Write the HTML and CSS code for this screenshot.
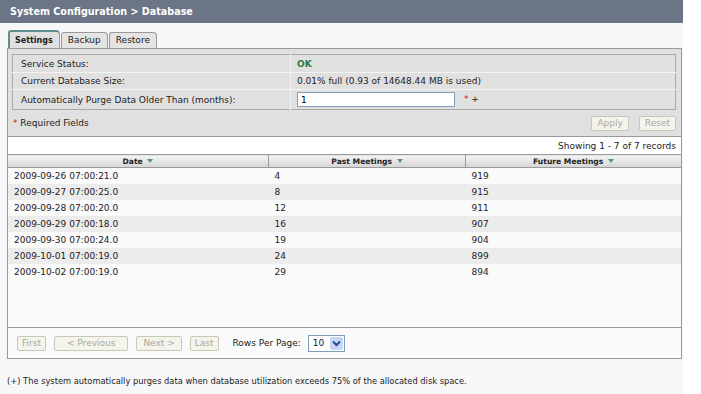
FILE: index.html
```html
<!DOCTYPE html>
<html lang="en">
<head>
    <meta charset="UTF-8">
    <title>System Configuration &gt; Database</title>
    <link rel="stylesheet" href="styles.css">
</head>
<body>

<div class="page">
    <div class="titlebar">System Configuration &gt; Database</div>

    <div class="content">
        <div class="tabs">
            <div class="tab active">Settings</div>
            <div class="tab">Backup</div>
            <div class="tab">Restore</div>
        </div>

        <div class="panel">
            <table class="settings">
                <tr>
                    <td class="label">Service Status:</td>
                    <td class="value ok">OK</td>
                </tr>
                <tr>
                    <td class="label">Current Database Size:</td>
                    <td class="value">0.01% full (0.93 of 14648.44 MB is used)</td>
                </tr>
                <tr class="input-row">
                    <td class="label">Automatically Purge Data Older Than (months):</td>
                    <td class="value"><input type="text" class="field" value="1"> <span class="req">*</span> +</td>
                </tr>
            </table>
            <div class="actions">
                <div><span class="req">*</span> Required Fields</div>
                <div class="buttons">
                    <button class="btn" disabled>Apply</button>
                    <button class="btn" disabled>Reset</button>
                </div>
            </div>
        </div>

        <div class="grid">
            <div class="records">Showing 1 - 7 of 7 records</div>
            <div class="grid-body">
                <table class="data">
                    <thead>
                        <tr>
                            <th class="col-date">Date <span class="sort"></span></th>
                            <th class="col-past">Past Meetings <span class="sort"></span></th>
                            <th>Future Meetings <span class="sort"></span></th>
                        </tr>
                    </thead>
                    <tbody>
                        <tr><td>2009-09-26 07:00:21.0</td><td>4</td><td>919</td></tr>
                        <tr><td>2009-09-27 07:00:25.0</td><td>8</td><td>915</td></tr>
                        <tr><td>2009-09-28 07:00:20.0</td><td>12</td><td>911</td></tr>
                        <tr><td>2009-09-29 07:00:18.0</td><td>16</td><td>907</td></tr>
                        <tr><td>2009-09-30 07:00:24.0</td><td>19</td><td>904</td></tr>
                        <tr><td>2009-10-01 07:00:19.0</td><td>24</td><td>899</td></tr>
                        <tr><td>2009-10-02 07:00:19.0</td><td>29</td><td>894</td></tr>
                    </tbody>
                </table>
            </div>
            <div class="pager">
                <button class="btn" disabled>First</button>
                <button class="btn prev" disabled>&lt; Previous</button>
                <button class="btn next" disabled>Next &gt;</button>
                <button class="btn" disabled>Last</button>
                <span class="rows-label">Rows Per Page:</span>
                <div class="select">
                    <span>10</span>
                    <span class="arrow">
                        <svg width="9" height="7" viewBox="0 0 9 7"><path d="M1 1.5 L4.5 5 L8 1.5" fill="none" stroke="#2a4a9a" stroke-width="2"/></svg>
                    </span>
                </div>
            </div>
        </div>

        <div class="note">(+) The system automatically purges data when database utilization exceeds 75% of the allocated disk space.</div>
    </div>
</div>

</body>
</html>
```

FILE: styles.css
```css
body {
    margin: 0;
    background: #fff;
    font-family: 'DejaVu Sans', Verdana, sans-serif;
    font-size: 9px;
    color: #222;
}
.page {
    width: 683px;
}
.titlebar {
    height: 23px;
    line-height: 23px;
    background: #6b7585;
    color: #fff;
    font-weight: bold;
    font-size: 9.6px;
    padding-left: 10px;
}
.content {
    background: #f7f7f7;
    padding: 8px 1px 10px 7px;
    min-height: 371px;
    box-sizing: border-box;
}
.tabs {
    display: flex;
    gap: 1px;
    margin-left: 1px;
    height: 17px;
    align-items: flex-end;
}
.tab {
    height: 15px;
    line-height: 15px;
    padding: 0 6px;
    border: 1px solid #9a9a9a;
    border-bottom: none;
    border-radius: 3px 4px 0 0;
    background: #e4e4e4;
}
.tab.active {
    height: 16px;
    line-height: 17px;
    font-weight: bold;
    font-size: 8px;
    padding: 0 6px 0 5px;
    background: #e0e0e0;
    border-color: #5f8f8f #9a9a9a #9a9a9a #5f8f8f;
    border-width: 2px 1px 0 2px;
}
.panel {
    border: 1px solid #999;
    background: #e0e0e0;
    padding: 5px 5px 0 4px;
}
.settings {
    width: 100%;
    border-collapse: collapse;
    border: 1px solid #a8a8a8;
}
.settings td {
    height: 16px;
    padding: 0 8px;
    border-top: 1px solid #f3f3f3;
}
.settings tr:first-child td {
    border-top: none;
    height: 17px;
}
.settings td.label {
    width: 261px;
    border-right: 1px solid #f3f3f3;
}
.settings td.value {
    padding-left: 6px;
}
.settings .input-row td {
    height: 19px;
}
.ok {
    color: #2a7a3a;
    font-weight: bold;
}
.field {
    width: 158px;
    height: 15px;
    padding: 0 3px;
    border: 1px solid #7f9db9;
    font-family: inherit;
    font-size: 9px;
    margin: 0;
    vertical-align: middle;
    box-sizing: border-box;
}
.req {
    color: #d02020;
    margin-left: 6px;
}
.actions .req {
    margin-left: 0;
}
.actions {
    display: flex;
    justify-content: space-between;
    align-items: center;
    height: 26px;
    padding-left: 1px;
}
.buttons {
    display: flex;
    gap: 10px;
}
.btn {
    font-family: inherit;
    font-size: 9px;
    height: 15px;
    padding: 0 5px;
    border: 1px solid #c8c8b8;
    border-radius: 2px;
    background: #f4f4ec;
    color: #a8a8a0;
}
.grid {
    border-left: 1px solid #999;
    border-right: 1px solid #999;
    border-bottom: 1px solid #999;
    background: #fafafa;
}
.records {
    text-align: right;
    height: 17px;
    line-height: 19px;
    padding-right: 5px;
    background: #fff;
}
.grid-body {
    height: 173px;
    background: #fafafa;
}
.data {
    width: 100%;
    border-collapse: collapse;
}
.data th {
    height: 12px;
    padding: 0;
    font-weight: bold;
    font-size: 7.6px;
    background: linear-gradient(#f4f4f4, #d6d6d6);
    border: 1px solid #9a9a9a;
    border-left: none;
    text-align: center;
}
.data th:last-child {
    border-right: none;
}
.col-date {
    width: 260px;
}
.col-past {
    width: 196px;
}
.sort {
    display: inline-block;
    width: 0;
    height: 0;
    border-left: 3px solid transparent;
    border-right: 3px solid transparent;
    border-top: 4px solid #5b9090;
    margin-left: 2px;
    vertical-align: 1px;
}
.data td {
    height: 16px;
    padding: 0 6px;
}
.data tbody tr:nth-child(even) td {
    background: #ececec;
}
.pager {
    border-top: 1px solid #999;
    height: 30px;
    display: flex;
    align-items: center;
    padding-left: 9px;
    gap: 8px;
    background: #fafafa;
}
.pager .btn {
    padding: 0 4px;
}
.pager .btn.prev {
    padding: 0 12px;
}
.pager .btn.next {
    padding: 0 6px;
}
.rows-label {
    margin-left: 6px;
    color: #222;
}
.select {
    display: flex;
    align-items: center;
    height: 15px;
    border: 1px solid #7f9db9;
    background: #fff;
    margin-left: -1px;
}
.select span:first-child {
    padding: 0 6px 0 4px;
}
.arrow {
    display: flex;
    align-items: center;
    justify-content: center;
    width: 13px;
    height: 13px;
    margin-right: 1px;
    background: #c6d6f6;
    border-radius: 2px;
}
.note {
    margin-top: 17px;
    font-size: 8.3px;
}
```
